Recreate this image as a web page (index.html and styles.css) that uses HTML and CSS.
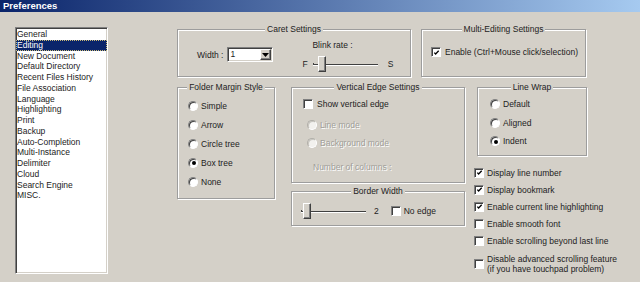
FILE: index.html
```html
<!DOCTYPE html>
<html lang="en">
<head>
    <meta charset="UTF-8">
    <title>Preferences</title>
    <link rel="stylesheet" href="styles.css">
</head>
<body>
    <div class="titlebar">Preferences</div>

    <div class="main">
        <ul class="cat-list">
            <li>General</li>
            <li class="selected">Editing</li>
            <li>New Document</li>
            <li>Default Directory</li>
            <li>Recent Files History</li>
            <li>File Association</li>
            <li>Language</li>
            <li>Highlighting</li>
            <li>Print</li>
            <li>Backup</li>
            <li>Auto-Completion</li>
            <li>Multi-Instance</li>
            <li>Delimiter</li>
            <li>Cloud</li>
            <li>Search Engine</li>
            <li>MISC.</li>
        </ul>

        <div class="panel">
            <div class="row-top">
                <div class="group caret">
                    <div class="group-title">Caret Settings</div>
                    <div class="caret-body">
                        <div class="width-field">
                            <span>Width :</span>
                            <div class="combo">
                                <span class="combo-value">1</span>
                                <span class="combo-btn">
                                    <svg width="7" height="4" viewBox="0 0 7 4"><path d="M0 0h7L3.5 4z" fill="#000"/></svg>
                                </span>
                            </div>
                        </div>
                        <div class="blink">
                            <div class="blink-label">Blink rate :</div>
                            <div class="blink-row">
                                <span>F</span>
                                <div class="slider"><span class="thumb caret-thumb"></span></div>
                                <span>S</span>
                            </div>
                        </div>
                    </div>
                </div>

                <div class="group multi">
                    <div class="group-title">Multi-Editing Settings</div>
                    <div class="opt multi-opt">
                        <span class="check"><svg width="8" height="8" viewBox="0 0 8 8"><polyline points="1.5,3.5 3,5.2 6.5,1.5" fill="none" stroke="#000" stroke-width="1.5"/></svg></span>
                        <span>Enable (Ctrl+Mouse click/selection)</span>
                    </div>
                </div>
            </div>

            <div class="row-main">
                <div class="col-a">
                    <div class="group folder">
                        <div class="group-title">Folder Margin Style</div>
                        <div class="radio-list">
                            <div class="opt"><span class="radio"></span>Simple</div>
                            <div class="opt"><span class="radio"></span>Arrow</div>
                            <div class="opt"><span class="radio"></span>Circle tree</div>
                            <div class="opt"><span class="radio on"><span class="dot"></span></span>Box tree</div>
                            <div class="opt"><span class="radio"></span>None</div>
                        </div>
                    </div>
                </div>

                <div class="col-b">
                    <div class="group vedge">
                        <div class="group-title">Vertical Edge Settings</div>
                        <div class="opt vedge-check">
                            <span class="check"></span>
                            <span>Show vertical edge</span>
                        </div>
                        <div class="opt disabled line-mode"><span class="radio"></span>Line mode</div>
                        <div class="opt disabled bg-mode"><span class="radio"></span>Background mode</div>
                        <div class="disabled columns">Number of columns :</div>
                    </div>

                    <div class="group border-width">
                        <div class="group-title">Border Width</div>
                        <div class="border-row">
                            <div class="slider"><span class="thumb border-thumb"></span></div>
                            <span class="border-value">2</span>
                            <div class="opt">
                                <span class="check"></span>
                                <span>No edge</span>
                            </div>
                        </div>
                    </div>
                </div>

                <div class="col-c">
                    <div class="group wrap">
                        <div class="group-title">Line Wrap</div>
                        <div class="radio-list wrap-list">
                            <div class="opt"><span class="radio"></span>Default</div>
                            <div class="opt"><span class="radio"></span>Aligned</div>
                            <div class="opt"><span class="radio on"><span class="dot"></span></span>Indent</div>
                        </div>
                    </div>

                    <ul class="check-list">
                        <li class="opt"><span class="check"><svg width="8" height="8" viewBox="0 0 8 8"><polyline points="1.5,3.5 3,5.2 6.5,1.5" fill="none" stroke="#000" stroke-width="1.5"/></svg></span>Display line number</li>
                        <li class="opt"><span class="check"><svg width="8" height="8" viewBox="0 0 8 8"><polyline points="1.5,3.5 3,5.2 6.5,1.5" fill="none" stroke="#000" stroke-width="1.5"/></svg></span>Display bookmark</li>
                        <li class="opt"><span class="check"><svg width="8" height="8" viewBox="0 0 8 8"><polyline points="1.5,3.5 3,5.2 6.5,1.5" fill="none" stroke="#000" stroke-width="1.5"/></svg></span>Enable current line highlighting</li>
                        <li class="opt"><span class="check"></span>Enable smooth font</li>
                        <li class="opt"><span class="check"></span>Enable scrolling beyond last line</li>
                        <li class="opt two-line"><span class="check"></span><span>Disable advanced scrolling feature<br>(if you have touchpad problem)</span></li>
                    </ul>
                </div>
            </div>
        </div>
    </div>
</body>
</html>
```

FILE: styles.css
```css
body {
    margin: 0;
    width: 640px;
    height: 282px;
    overflow: hidden;
    background: #d4d0c8;
    font-family: "Liberation Sans", Arial, sans-serif;
    font-size: 8.5px;
    color: #222;
}

.titlebar {
    height: 12px;
    line-height: 12px;
    padding-left: 3px;
    background: linear-gradient(to right, #0a246a, #a6caf0);
    color: white;
    font-size: 9.5px;
    font-weight: bold;
}

.main {
    display: flex;
    padding: 15px 0 0 15px;
}

/* left category list */
.cat-list {
    list-style: none;
    margin: 0;
    padding: 1px 0 0 0;
    width: 93px;
    height: 247px;
    box-sizing: border-box;
    background: white;
    border: 1px solid;
    border-color: #808080 #fff #fff #808080;
    box-shadow: inset 1px 1px 0 #404040, inset -1px -1px 0 #d4d0c8;
}

.cat-list li {
    height: 10.75px;
    line-height: 10.75px;
    padding-left: 1px;
    white-space: nowrap;
}

.cat-list li.selected {
    background: #0a246a;
    color: white;
    outline: 1px dotted #c8b878;
    outline-offset: -1px;
}

.panel {
    margin: 2px 0 0 69px;
}

/* group boxes */
.group {
    box-sizing: border-box;
    border: 1px solid #9d9d9d;
    box-shadow: inset 1px 1px 0 #fff, 1px 1px 0 #fff;
}

.group-title {
    display: table;
    margin: -6px auto 0;
    padding: 0 2px;
    line-height: 10px;
    background: #d4d0c8;
    white-space: nowrap;
}

.row-top {
    display: flex;
    gap: 10px;
}

.caret {
    width: 234px;
    height: 48px;
}

.multi {
    width: 165px;
    height: 48px;
}

.caret-body {
    display: flex;
    padding-left: 19px;
}

.width-field {
    display: flex;
    align-items: center;
    gap: 4px;
    height: 15px;
    margin-top: 13px;
}

.combo {
    display: flex;
    align-items: center;
    width: 46px;
    height: 15px;
    box-sizing: border-box;
    background: white;
    border: 1px solid;
    border-color: #808080 #fff #fff #808080;
    box-shadow: inset 1px 1px 0 #404040, inset -1px -1px 0 #d4d0c8;
    padding: 1px 1px 1px 2px;
}

.combo-value {
    flex: 1;
    line-height: 11px;
}

.combo-btn {
    display: flex;
    align-items: center;
    justify-content: center;
    width: 11px;
    height: 11px;
    box-sizing: border-box;
    background: #d4d0c8;
    border: 1px solid;
    border-color: #fff #404040 #404040 #fff;
    box-shadow: inset -1px -1px 0 #808080;
}

.blink {
    margin-left: 29px;
}

.blink-label {
    margin-top: 6px;
    padding-left: 10px;
    line-height: 10px;
}

.blink-row {
    display: flex;
    align-items: center;
    gap: 5px;
    margin-top: 6px;
}

.blink-row span:last-child {
    margin-left: 5px;
}

/* trackbar */
.slider {
    display: flex;
    align-items: center;
    width: 65px;
    height: 16px;
    background:
        linear-gradient(#404040, #404040) no-repeat 0 8px / 100% 1px,
        linear-gradient(#fff, #fff) no-repeat 0 9px / 100% 1px,
        linear-gradient(#404040, #404040) no-repeat 0 7px / 1px 3px;
}

.thumb {
    width: 8px;
    height: 16px;
    box-sizing: border-box;
    background: #d4d0c8;
    border: 1px solid;
    border-color: #fff #404040 #404040 #fff;
    box-shadow: inset -1px -1px 0 #808080;
}

.caret-thumb {
    margin-left: 13px;
}

.border-thumb {
    margin-left: 2px;
}

/* checkbox and radio */
.opt {
    display: flex;
    align-items: center;
    gap: 3px;
    white-space: nowrap;
}

.check {
    display: flex;
    align-items: center;
    justify-content: center;
    flex: none;
    width: 10px;
    height: 10px;
    box-sizing: border-box;
    background: white;
    border: 1px solid;
    border-color: #808080 #fff #fff #808080;
    box-shadow: inset 1px 1px 0 #404040, 0 0 0 0 transparent;
    padding: 1px 0 0 1px;
}

.check svg {
    display: block;
}

.radio {
    display: flex;
    align-items: center;
    justify-content: center;
    flex: none;
    width: 10px;
    height: 10px;
    box-sizing: border-box;
    border-radius: 50%;
    background: white;
    border: 1px solid;
    border-color: #808080 #fff #fff #808080;
    box-shadow: inset 1px 1px 0 #404040;
}

.radio .dot {
    width: 4px;
    height: 4px;
    margin: 1px 0 0 1px;
    border-radius: 50%;
    background: #000;
}

.disabled {
    color: #a09e98;
    text-shadow: 1px 1px 0 #fff;
}

.disabled .radio {
    background: #f2f1ee;
    border-color: #b0aea8 #fff #fff #b0aea8;
    box-shadow: inset 1px 1px 0 #c8c6c0;
}

.multi-opt {
    margin: 13px 0 0 9px;
    gap: 4px;
}

.row-main {
    display: flex;
    margin-top: 10px;
}

.folder {
    width: 98px;
    height: 112px;
}

.radio-list {
    padding: 4px 0 0 10px;
}

.radio-list .opt {
    height: 19px;
}

.col-b {
    margin-left: 16px;
}

.vedge {
    width: 174px;
    height: 96px;
}

.vedge-check {
    height: 10px;
    margin: 7px 0 0 11px;
    gap: 4px;
}

.line-mode {
    height: 10px;
    margin: 11px 0 0 15px;
}

.bg-mode {
    height: 10px;
    margin: 8px 0 0 15px;
}

.columns {
    line-height: 10px;
    margin: 14px 0 0 21px;
}

.border-width {
    width: 174px;
    height: 35px;
    margin-top: 8px;
}

.border-row {
    display: flex;
    align-items: center;
    margin: 7px 0 0 9px;
}

.border-value {
    margin: 0 12px 0 8px;
}

.col-c {
    margin-left: 9px;
}

.wrap {
    width: 110px;
    height: 69px;
    margin-left: 3px;
}

.wrap-list {
    padding: 3px 0 0 12px;
}

.wrap-list .opt {
    height: 18.5px;
}

.check-list {
    list-style: none;
    margin: 8px 0 0 0;
    padding: 0;
}

.check-list li {
    height: 17px;
}

.check-list li.two-line {
    height: 20px;
    margin-top: 5px;
    line-height: 10px;
}
```
